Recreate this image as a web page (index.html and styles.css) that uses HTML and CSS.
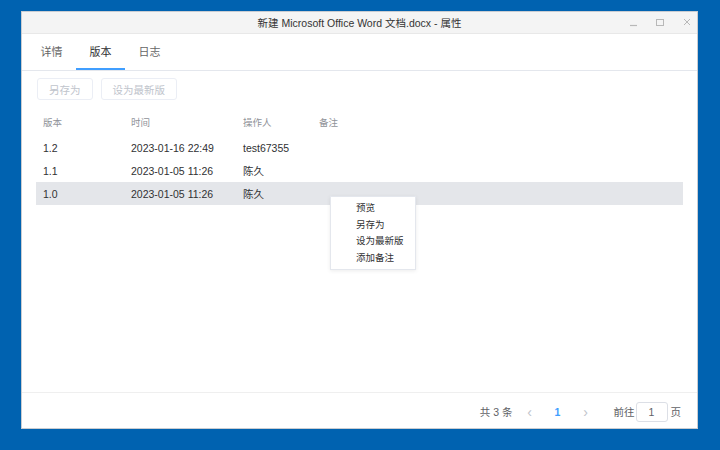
FILE: index.html
```html
<!DOCTYPE html>
<html lang="zh-CN">
<head>
<meta charset="utf-8">
<title>属性</title>
<link rel="stylesheet" href="styles.css">
</head>
<body>
<div class="window">
  <div class="titlebar">
    <div class="title">新建 Microsoft Office Word 文档.docx - 属性</div>
    <div class="controls">
      <svg class="ctl" width="10" height="10" viewBox="0 0 10 10"><line x1="2" y1="8.5" x2="9" y2="8.5" stroke="#b8b8b8" stroke-width="1.2"/></svg>
      <svg class="ctl" width="10" height="10" viewBox="0 0 10 10"><rect x="1.5" y="2.5" width="7" height="6" fill="none" stroke="#b8b8b8" stroke-width="1"/></svg>
      <svg class="ctl" width="10" height="10" viewBox="0 0 10 10"><path d="M2 2 L8 8 M8 2 L2 8" stroke="#b8b8b8" stroke-width="1"/></svg>
    </div>
  </div>
  <div class="tabs">
    <div class="tab">详情</div>
    <div class="tab active">版本</div>
    <div class="tab">日志</div>
  </div>
  <div class="content">
    <div class="toolbar">
      <button class="btn" disabled>另存为</button>
      <button class="btn" disabled>设为最新版</button>
    </div>
    <div class="table">
      <div class="row head">
        <div class="c c1">版本</div><div class="c c2">时间</div><div class="c c3">操作人</div><div class="c c4">备注</div>
      </div>
      <div class="row">
        <div class="c c1">1.2</div><div class="c c2">2023-01-16 22:49</div><div class="c c3">test67355</div><div class="c c4"></div>
      </div>
      <div class="row">
        <div class="c c1">1.1</div><div class="c c2">2023-01-05 11:26</div><div class="c c3">陈久</div><div class="c c4"></div>
      </div>
      <div class="row selected">
        <div class="c c1">1.0</div><div class="c c2">2023-01-05 11:26</div><div class="c c3">陈久</div><div class="c c4"></div>
      </div>
    </div>
  </div>
  <div class="footer">
    <span class="total">共 3 条</span>
    <span class="arrow">&lsaquo;</span>
    <span class="page">1</span>
    <span class="arrow">&rsaquo;</span>
    <span class="goto">前往</span>
    <span class="input">1</span>
    <span class="unit">页</span>
  </div>
  <ul class="menu">
    <li>预览</li>
    <li>另存为</li>
    <li>设为最新版</li>
    <li>添加备注</li>
  </ul>
</div>
</body>
</html>
```

FILE: styles.css
```css
* { box-sizing: border-box; }
html, body { margin: 0; padding: 0; }
body {
  width: 720px;
  height: 450px;
  background: #0062b0;
  padding: 11px 22px 21px 21px;
  font-family: "Liberation Sans", "Noto Sans CJK SC", sans-serif;
  overflow: hidden;
}
.window {
  position: relative;
  width: 677px;
  height: 418px;
  background: #fff;
  border: 1px solid #c9ccd1;
  display: flex;
  flex-direction: column;
}
.titlebar {
  position: relative;
  height: 22px;
  background: #f4f4f4;
  border-bottom: 1px solid #e8e8e8;
  display: flex;
  align-items: center;
  justify-content: center;
  flex-shrink: 0;
}
.title {
  font-size: 10.5px;
  color: #333;
}
.controls {
  position: absolute;
  right: 5px;
  top: 5px;
  display: flex;
  gap: 17px;
}
.ctl { display: block; }
.tabs {
  height: 37px;
  border-bottom: 1px solid #e4e7ed;
  display: flex;
  padding-left: 5px;
  flex-shrink: 0;
}
.tab {
  width: 49px;
  text-align: center;
  padding-top: 2px;
  line-height: 33px;
  font-size: 11px;
  color: #666;
  border-bottom: 2px solid transparent;
}
.tab.active {
  color: #303133;
  border-bottom-color: #409eff;
}
.content {
  flex: 1;
  padding: 7px 14px 0 14px;
}
.toolbar {
  display: flex;
  gap: 8px;
  padding-left: 1px;
}
.btn {
  height: 22px;
  padding: 0 11px;
  font-family: inherit;
  font-size: 10.5px;
  color: #c0c4cc;
  background: #fff;
  border: 1px solid #ebeef5;
  border-radius: 3px;
}
.table {
  margin-top: 8px;
}
.row {
  display: flex;
  height: 23px;
  align-items: center;
  font-size: 10.5px;
  color: #303133;
}
.row.head {
  height: 28px;
  color: #909399;
  font-size: 9.5px;
}
.row.selected { background: #e4e6ea; }
.c { padding-left: 7px; white-space: nowrap; }
.c1 { width: 88px; }
.c2 { width: 112px; }
.c3 { width: 76px; }
.c4 { flex: 1; }
.footer {
  height: 36px;
  border-top: 1px solid #efefef;
  display: flex;
  align-items: center;
  justify-content: flex-end;
  padding: 2px 16px 0 0;
  font-size: 10.5px;
  color: #606266;
  flex-shrink: 0;
}
.total { margin-right: 3px; }
.arrow {
  color: #c0c4cc;
  font-size: 14px;
  width: 28px;
  text-align: center;
}
.page {
  color: #409eff;
  font-weight: bold;
  width: 28px;
  text-align: center;
}
.goto { margin-left: 14px; }
.input {
  width: 32px;
  height: 20px;
  margin: 0 3px 0 1px;
  border: 1px solid #dcdfe6;
  border-radius: 3px;
  text-align: center;
  line-height: 18px;
  color: #606266;
}
.menu {
  position: absolute;
  left: 308px;
  top: 184px;
  width: 86px;
  margin: 0;
  padding: 3px 0;
  list-style: none;
  background: #fff;
  border: 1px solid #e4e7ed;
  box-shadow: 0 1px 4px rgba(0,0,0,0.08);
}
.menu li {
  height: 16.5px;
  line-height: 16.5px;
  padding-left: 25px;
  font-size: 9.5px;
  color: #303133;
}
```
